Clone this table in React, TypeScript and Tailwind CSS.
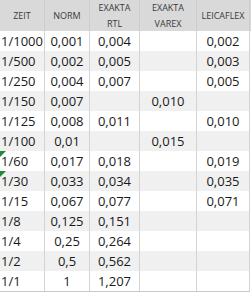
const ROWS: [string, string, string, string, string][] = [
  ["1/1000", "0,001", "0,004", "", "0,002"],
  ["1/500", "0,002", "0,005", "", "0,003"],
  ["1/250", "0,004", "0,007", "", "0,005"],
  ["1/150", "0,007", "", "0,010", ""],
  ["1/125", "0,008", "0,011", "", "0,010"],
  ["1/100", "0,01", "", "0,015", ""],
  ["1/60", "0,017", "0,018", "", "0,019"],
  ["1/30", "0,033", "0,034", "", "0,035"],
  ["1/15", "0,067", "0,077", "", "0,071"],
  ["1/8", "0,125", "0,151", "", ""],
  ["1/4", "0,25", "0,264", "", ""],
  ["1/2", "0,5", "0,562", "", ""],
  ["1/1", "1", "1,207", "", ""],
];

// rows with the little green error marker
const FLAGGED = new Set(["1/60", "1/30"]);

const cols = "grid grid-cols-[45px_45px_50px_57px_53px]";

export default function App() {
  return (
    <div className="w-[251px] h-[294px] bg-white font-['Open_Sans',sans-serif] overflow-hidden">
      {/* Header */}
      <div className={`${cols} h-[31px] bg-[#d9d9d9] text-[9px] leading-[16px] text-[#3a3a3a]`}>
        <div className="border-r border-[#cdcdcd] flex items-center justify-center">ZEIT</div>
        <div className="border-r border-[#cdcdcd] flex items-center justify-center">NORM</div>
        <div className="border-r border-[#cdcdcd] flex flex-col items-center justify-center">
          <span>EXAKTA</span>
          <span>RTL</span>
        </div>
        <div className="border-r border-[#cdcdcd] flex flex-col items-center justify-center">
          <span>EXAKTA</span>
          <span>VAREX</span>
        </div>
        <div className="border-r border-[#cdcdcd] flex items-center justify-center">LEICAFLEX</div>
      </div>

      {/* Body */}
      <div className="border-b border-[#c8c8c8] w-[250px]">
        {ROWS.map((r, i) => (
          <div
            key={r[0]}
            className={`${cols} h-[20px] text-[13px] leading-[20px] text-[#1a1a1a] ${i % 2 ? "bg-[#f0f0f0]" : "bg-white"}`}
          >
            <div className="relative border-r border-[#d4d4d4] pl-[1px]">
              {FLAGGED.has(r[0]) && (
                <span className="absolute left-0 top-0 w-0 h-0 border-t-[6px] border-t-[#1f8a3b] border-r-[6px] border-r-transparent" />
              )}
              {r[0]}
            </div>
            <div className="border-r border-[#d4d4d4] text-center">{r[1]}</div>
            <div className="border-r border-[#d4d4d4] text-center">{r[2]}</div>
            <div className="border-r border-[#d4d4d4] text-center">{r[3]}</div>
            <div className="border-r border-[#d4d4d4] text-center">{r[4]}</div>
          </div>
        ))}
      </div>
    </div>
  );
}
